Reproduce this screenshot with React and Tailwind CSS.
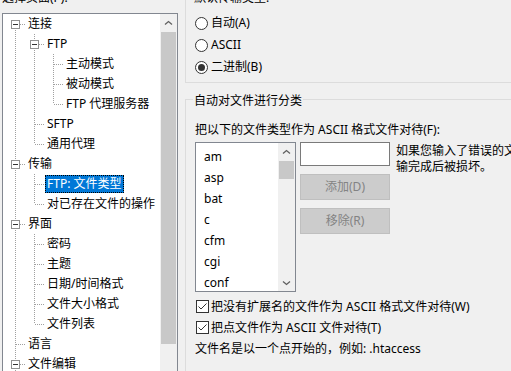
import React from "react";

const FONT = { fontFamily: '"Noto Sans", "Noto Sans CJK SC", sans-serif' };
const DOT = "#a0a0a0";

// tree rows: guides = ancestor columns that still carry a line
const TREE = [
  { label: "连接", guides: [], open: true, first: true },
  { label: "FTP", guides: [true], open: true },
  { label: "主动模式", guides: [true, true] },
  { label: "被动模式", guides: [true, true] },
  { label: "FTP 代理服务器", guides: [true, true], last: true },
  { label: "SFTP", guides: [true] },
  { label: "通用代理", guides: [true], last: true },
  { label: "传输", guides: [], open: true },
  { label: "FTP: 文件类型", guides: [true], selected: true },
  { label: "对已存在文件的操作", guides: [true], last: true },
  { label: "界面", guides: [], open: true },
  { label: "密码", guides: [true] },
  { label: "主题", guides: [true] },
  { label: "日期/时间格式", guides: [true] },
  { label: "文件大小格式", guides: [true] },
  { label: "文件列表", guides: [true], last: true },
  { label: "语言", guides: [] },
  { label: "文件编辑", guides: [], open: true },
];

const EXTS = ["am", "asp", "bat", "c", "cfm", "cgi", "conf"];

function Guide({ on }) {
  return (
    <svg width="19" height="20" className="shrink-0">
      {on && <line x1="9.5" y1="0" x2="9.5" y2="20" stroke={DOT} strokeDasharray="1 1" />}
    </svg>
  );
}

function Connector({ open, first, last }) {
  return (
    <svg width="19" height="20" className="shrink-0">
      {!first && <line x1="9.5" y1="0" x2="9.5" y2="10" stroke={DOT} strokeDasharray="1 1" />}
      {!last && <line x1="9.5" y1="10" x2="9.5" y2="20" stroke={DOT} strokeDasharray="1 1" />}
      <line x1={open ? 14 : 10} y1="10.5" x2="19" y2="10.5" stroke={DOT} strokeDasharray="1 1" />
      {open && (
        <>
          <rect x="5.5" y="6.5" width="8" height="8" fill="#fff" stroke="#919191" />
          <line x1="7" y1="10.5" x2="12" y2="10.5" stroke="#333" />
        </>
      )}
    </svg>
  );
}

function Chevron({ down }) {
  return (
    <svg width="9" height="6" viewBox="0 0 9 6">
      <path
        d={down ? "M1 1.5 L4.5 4.5 L8 1.5" : "M1 4.5 L4.5 1.5 L8 4.5"}
        fill="none"
        stroke="#606060"
        strokeWidth="1.3"
      />
    </svg>
  );
}

function Radio({ checked, label }) {
  return (
    <div className="h-[22px] flex items-center gap-[3px]">
      <div className="w-[13px] h-[13px] rounded-full border border-[#333] bg-white flex items-center justify-center">
        {checked && <div className="w-[7px] h-[7px] rounded-full bg-[#333]" />}
      </div>
      <span className="leading-[16px]">{label}</span>
    </div>
  );
}

function Check({ label }) {
  return (
    <div className="h-[21px] flex items-center gap-[2px] pl-px">
      <div className="w-[13px] h-[13px] border border-[#333] bg-white">
        <svg width="11" height="11" viewBox="0 0 11 11">
          <path d="M1.5 5.5 L4 8 L9.5 2.5" fill="none" stroke="#333" strokeWidth="1" />
        </svg>
      </div>
      <span className="leading-[16px] whitespace-nowrap">{label}</span>
    </div>
  );
}

export default function App() {
  return (
    <div
      className="w-[511px] h-[371px] overflow-hidden bg-[#f0f0f0] flex items-start text-[12px] text-black"
      style={FONT}
    >
      {/* Page tree */}
      <div className="w-[176px] ml-[2px] shrink-0 flex flex-col -mt-[10px]">
        <div className="h-[16px] leading-[16px]">选择页面(P):</div>
        <div className="mt-[7px] h-[400px] border border-[#828790] bg-white flex">
          <div className="flex-1 pl-[3px] flex flex-col">
            {TREE.map((n) => (
              <div key={n.label} className="h-[20px] flex items-center">
                {n.guides.map((g, i) => (
                  <Guide key={i} on={g} />
                ))}
                <Connector open={n.open} first={n.first} last={n.last} />
                <span
                  className={`ml-px px-[2px] h-[18px] leading-[18px] whitespace-nowrap ${
                    n.selected ? "bg-[#0078d7] text-white outline outline-1 outline-dotted outline-[#000] -outline-offset-1" : ""
                  }`}
                >
                  {n.label}
                </span>
              </div>
            ))}
          </div>
          <div className="w-[17px] shrink-0 bg-[#f0f0f0] flex flex-col">
            <div className="h-[17px] flex items-center justify-center">
              <Chevron />
            </div>
            <div className="mx-px mt-px h-[312px] bg-[#c8c8c8]" />
          </div>
        </div>
      </div>

      {/* Settings */}
      <div className="w-[400px] shrink-0 ml-[7px] -mt-[10px] flex flex-col">
        <div className="border-l border-r border-b border-[#dcdcdc] pl-[9px] pb-[4px]">
          <div className="h-[16px] leading-[16px] -ml-px">默认传输类型:</div>
          <div className="mt-[6px]">
            <Radio label="自动(A)" />
            <Radio label="ASCII" />
            <Radio label="二进制(B)" checked />
          </div>
        </div>

        <div className="mt-[16px] h-[400px] border-l border-t border-[#dcdcdc] flex flex-col">
          <div className="-mt-[7px] ml-[7px] w-fit px-px bg-[#f0f0f0] leading-[16px]">自动对文件进行分类</div>
          <div className="pl-[9px] flex flex-col">
            <div className="mt-[13px] leading-[16px] whitespace-nowrap">把以下的文件类型作为 ASCII 格式文件对待(F):</div>
            <div className="mt-[4px] flex items-start">
              <div className="w-[101px] h-[150px] shrink-0 border border-[#828790] bg-white flex">
                <div className="flex-1 pl-[8px] pt-[3px] leading-[21px] overflow-hidden">
                  {EXTS.map((e) => (
                    <div key={e}>{e}</div>
                  ))}
                </div>
                <div className="w-[17px] shrink-0 bg-[#f0f0f0] flex flex-col">
                  <div className="h-[17px] flex items-center justify-center">
                    <Chevron />
                  </div>
                  <div className="mx-px mt-px h-[18px] bg-[#c8c8c8]" />
                  <div className="flex-1" />
                  <div className="h-[17px] flex items-center justify-center">
                    <Chevron down />
                  </div>
                </div>
              </div>
              <div className="ml-[4px] w-[90px] shrink-0 flex flex-col">
                <div className="h-[24px] border border-[#7a7a7a] bg-white" />
                <div className="mt-[8px] h-[26px] border border-[#bfbfbf] bg-[#cccccc] text-[#838383] flex items-center justify-center">
                  添加(D)
                </div>
                <div className="mt-[8px] h-[26px] border border-[#bfbfbf] bg-[#cccccc] text-[#838383] flex items-center justify-center">
                  移除(R)
                </div>
              </div>
              <div className="ml-[6px] mt-px leading-[16px] whitespace-nowrap">
                如果您输入了错误的文件类型，文件可能在传
                <br />
                输完成后被损坏。
              </div>
            </div>
            <div className="mt-[4px]">
              <Check label="把没有扩展名的文件作为 ASCII 格式文件对待(W)" />
              <Check label="把点文件作为 ASCII 文件对待(T)" />
              <div className="h-[21px] flex items-center whitespace-nowrap">文件名是以一个点开始的，例如: .htaccess</div>
            </div>
          </div>
        </div>
      </div>
    </div>
  );
}
